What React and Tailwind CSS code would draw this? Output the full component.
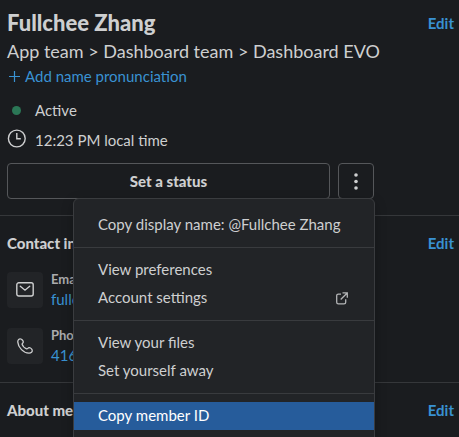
function Edit() {
  return <a className="text-[15px] leading-[22px] font-bold text-[#3992d2]">Edit</a>;
}

function SectionHeader({ title }) {
  return (
    <div className="flex justify-between">
      <h2 className="text-[15px] leading-[22px] font-black whitespace-nowrap text-[#cecfd0]">{title}</h2>
      <Edit />
    </div>
  );
}

function ContactRow({ icon, label, value }) {
  return (
    <div className="flex h-9 items-center gap-2">
      <div className="flex size-9 items-center justify-center rounded bg-[#222427] pb-px text-[#cecfd0]">{icon}</div>
      <div className="-mt-px whitespace-nowrap">
        <div className="text-[13px] leading-[18px] font-bold text-[#ababad]">{label}</div>
        <div className="text-[15px] leading-[22px] text-[#3992d2]">{value}</div>
      </div>
    </div>
  );
}

function MenuItem({ children, active }) {
  return (
    <div
      className={
        active
          ? "flex h-7 items-center justify-between bg-[#265c9b] pr-[26px] pb-0.5 pl-6 text-white"
          : "flex h-7 items-center justify-between pr-[26px] pb-0.5 pl-6"
      }
    >
      {children}
    </div>
  );
}

function Separator() {
  return <div className="my-2 h-px bg-[#393b3e]" />;
}

function ExternalIcon() {
  return (
    <svg className="mt-0.5" width="12" height="13" viewBox="0 0 12 13" fill="none" stroke="#b4b5b7" strokeWidth="1.3">
      <path d="M5 2.1H2.4C1.4 2.1.7 2.7.7 3.7V10.2C.7 11.3 1.4 11.9 2.4 11.9H8C9 11.9 9.7 11.3 9.7 10.2V7.3M6.5 .9H11.3V5.7M11 1.2L4.7 7.5" />
    </svg>
  );
}

function Menu() {
  return (
    <div className="absolute top-[198px] left-[73px] h-[260px] w-[302px] rounded-[6px] border border-[#3a3c3f] bg-[#222427] pt-3 text-[15px] text-[#cecfd0] shadow-[0_4px_12px_rgba(0,0,0,0.25)]">
      <MenuItem>Copy display name: @Fullchee Zhang</MenuItem>
      <Separator />
      <MenuItem>View preferences</MenuItem>
      <MenuItem>
        Account settings
        <ExternalIcon />
      </MenuItem>
      <Separator />
      <MenuItem>View your files</MenuItem>
      <MenuItem>Set yourself away</MenuItem>
      <Separator />
      <MenuItem active>Copy member ID</MenuItem>
    </div>
  );
}

export default function App() {
  return (
    <div className="relative h-[437px] w-[459px] overflow-hidden bg-[#1a1c1f] font-['Lato',sans-serif] text-[15px] leading-[22px] text-[#cecfd0]">
      <section className="h-[215px] pt-2 pr-[5px] pl-[7px]">
        <div className="flex items-center justify-between">
          <h1 className="text-[22px] leading-[30px] font-black">Fullchee Zhang</h1>
          <Edit />
        </div>
        <p className="text-[18px] leading-[27px]">App team &gt; Dashboard team &gt; Dashboard EVO</p>
        <div className="flex items-center gap-[5px] pl-0.5 text-[#3992d2]">
          <svg width="11" height="11" viewBox="0 0 11 11" stroke="currentColor" strokeWidth="1.2">
            <path d="M5.5 0V11M0 5.5H11" />
          </svg>
          <span>Add name pronunciation</span>
        </div>
        <div className="mt-3 flex items-center">
          <span className="ml-[5px] size-[9px] rounded-full bg-[#2b7756]" />
          <span className="ml-[14px]">Active</span>
        </div>
        <div className="mt-2 flex items-center gap-[9px]">
          <svg className="-mt-1" width="19" height="19" viewBox="0 0 19 19" fill="none" stroke="currentColor" strokeWidth="1.4">
            <circle cx="9.8" cy="9.5" r="8.4" />
            <path d="M9.8 4V9.7H13.8" />
          </svg>
          <span>12:23 PM local time</span>
        </div>
        <div className="mt-3 flex gap-2">
          <button className="h-9 w-[323px] rounded border border-[#55575a] text-[15px] font-black">Set a status</button>
          <button className="flex h-9 w-9 items-center justify-center rounded border border-[#55575a]">
            <svg width="4" height="17" viewBox="0 0 4 17" fill="currentColor">
              <circle cx="2" cy="2" r="1.8" />
              <circle cx="2" cy="8.5" r="1.8" />
              <circle cx="2" cy="15" r="1.8" />
            </svg>
          </button>
        </div>
      </section>
      <section className="h-[167px] border-t border-[#35373a] pt-4 pr-[5px] pl-[7px]">
        <SectionHeader title="Contact information" />
        <div className="mt-[18px] flex flex-col gap-5">
          <ContactRow
            label="Email"
            value="fullchee"
            icon={
              <svg width="18" height="15" viewBox="0 0 18 15" fill="none" stroke="currentColor" strokeWidth="1.4" strokeLinecap="round">
                <rect x=".8" y=".8" width="16.4" height="13.2" rx="2" />
                <path d="M4.3 4.2L9 8.2L13.7 4.2" />
              </svg>
            }
          />
          <ContactRow
            label="Phone"
            value="416"
            icon={
              <svg width="16" height="16" viewBox="0 0 16 16" fill="none" stroke="currentColor" strokeWidth="1.3" strokeLinejoin="round">
                <path d="M3.5.8C2 .6.6 2 .8 4.1C1.2 9.5 6.5 15 11.9 15.2C14.1 15.3 15.6 13.7 15.2 12.2C15 11.2 13.2 9.8 12.1 9.7C11 9.6 10.7 11.1 9.7 10.9C8 10.4 5.6 8 5.1 6.3C4.9 5.3 6.3 5.1 6.3 3.9C6.3 2.9 4.6.9 3.5.8Z" />
              </svg>
            }
          />
        </div>
      </section>
      <section className="border-t border-[#35373a] pt-4 pr-[5px] pl-[7px]">
        <SectionHeader title="About me" />
      </section>
      <Menu />
    </div>
  );
}
